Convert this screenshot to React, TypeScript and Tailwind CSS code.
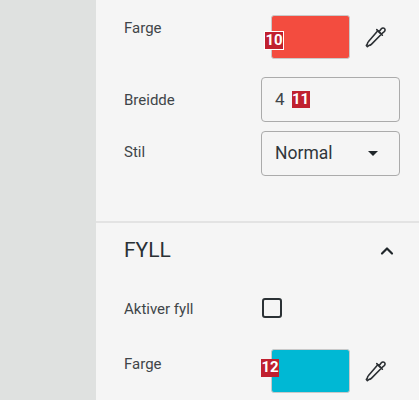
import React from 'react';
import { ChevronUp } from 'lucide-react';

// Numbered marker that sits over a control
const Badge = ({ n, className }: { n: number; className: string }) => (
  <span className={`absolute flex w-[18px] items-center justify-center bg-[#c0202f] text-[15px] font-bold leading-none text-white ${className}`}>
    {n}
  </span>
);

const Eyedropper = () => (
  <svg className="ml-[13px] mt-[9px] h-[25px] w-[25px] text-[#2b2f33]" viewBox="0 0 24 24" fill="none" stroke="currentColor" strokeWidth={1.5} strokeLinejoin="round" strokeLinecap="round">
    <path d="M14.2 6.4l3.4 3.4L8 19.6c-.8.8-1.6 1-2.5 1.1l-1.3 1-1-1 .9-1.3c.1-.9.4-1.8 1.2-2.6z" />
    <path d="M13.2 5.4l5.4 5.4M15.6 7.2l2-2.6c.9-1 2.2-1.1 3-.3s.8 2.1-.2 3l-2.6 2.1" />
  </svg>
);

const Label = ({ children, className = '' }: { children: React.ReactNode; className?: string }) => (
  <span className={`w-[137px] shrink-0 text-[15px] text-[#3f4549] ${className}`}>{children}</span>
);

const Swatch = ({ color, badge, badgeClass }: { color: string; badge: number; badgeClass: string }) => (
  <div className="relative ml-[10px] h-[44px] w-[79px]">
    <div className={`h-full w-full rounded-[3px] border border-[#c9c9c9] ${color}`} />
    <Badge n={badge} className={badgeClass} />
  </div>
);

export default function App() {
  return (
    <div className="flex h-[400px] w-[419px] overflow-hidden bg-[#dfe1e0] font-['Roboto',sans-serif]">
      <div className="ml-[96px] w-[323px] bg-[#f5f5f5]">
        <div className="pl-[28px] pr-[19px] pt-[15px]">
          {/* Stroke colour */}
          <div className="flex items-start">
            <Label className="mt-[2px]">Farge</Label>
            <Swatch color="bg-[#f34c3f]" badge={10} badgeClass="left-[-6px] top-[17px] h-[17px] outline outline-1 outline-white" />
            <Eyedropper />
          </div>

          {/* Width */}
          <div className="mt-[18px] flex items-center">
            <Label className="mt-[2px]">Breidde</Label>
            <div className="flex h-[45px] w-[139px] items-center gap-[7px] rounded-[4px] border border-[#ababab] pl-[13px] text-[17px] text-[#3f4549]">
              4
              <span className="flex h-[17px] w-[18px] items-center justify-center bg-[#c0202f] text-[15px] font-bold leading-none text-white">11</span>
            </div>
          </div>

          {/* Line style */}
          <div className="mt-[9px] flex items-center">
            <Label className="-mt-[3px]">Stil</Label>
            <div className="flex h-[45px] w-[139px] items-center justify-between rounded-[4px] border border-[#ababab] pl-[13px] pr-[21px] text-[17.5px] text-[#30363a]">
              Normal
              <span className="h-0 w-0 border-x-[5px] border-t-[5px] border-x-transparent border-t-[#20262a]" />
            </div>
          </div>
        </div>

        <div className="mt-[45px] h-[2px] bg-[#e3e3e3]" />

        <div className="pl-[28px] pr-[19px]">
          <div className="flex h-[56px] items-center justify-between">
            <span className="text-[21px] text-[#2a3135]">FYLL</span>
            <ChevronUp className="mr-[3px] h-[20px] w-[20px] text-[#20262a]" strokeWidth={2.6} />
          </div>

          <div className="mt-[17px] flex items-center">
            <Label className="mt-[2px]">Aktiver fyll</Label>
            <span className="ml-[1px] h-[20px] w-[20px] rounded-[3px] border-[2.5px] border-[#2b3135]" />
          </div>

          <div className="mt-[28px] flex items-start">
            <Label className="mt-[4px]">Farge</Label>
            <Swatch color="bg-[#00b8d4]" badge={12} badgeClass="left-[-10px] top-[10px] h-[18px]" />
            <Eyedropper />
          </div>
        </div>
      </div>
    </div>
  );
}
